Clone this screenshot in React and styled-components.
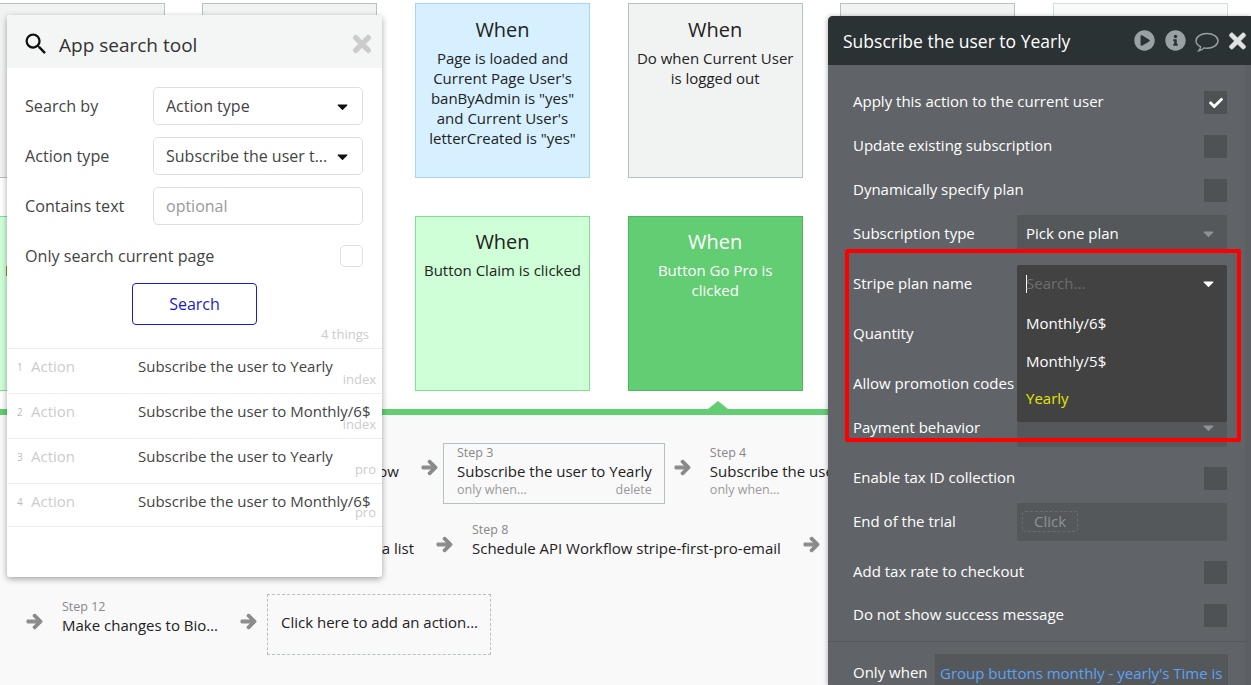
import React from "react";
import styled, { createGlobalStyle } from "styled-components";
import { FaArrowRight, FaTimes, FaCheck, FaPlayCircle, FaInfoCircle, FaCaretDown } from "react-icons/fa";
import { MdSearch } from "react-icons/md";

const Global = createGlobalStyle`
  html, body { margin: 0; padding: 0; background: #fff; }
  * { box-sizing: border-box; }
  body { font-family: "Open Sans", "Liberation Sans", sans-serif; }
`;

const Page = styled.div`
  position: relative;
  width: 1251px;
  height: 685px;
  overflow: hidden;
  background: #fff;
`;

/* ---------- canvas of event cards ---------- */
const Canvas = styled.section`
  height: 409px;
  padding-top: 3px;
  margin-left: -10.3px;
  display: grid;
  grid-template-columns: repeat(6, 175px);
  grid-auto-rows: 175px;
  column-gap: 37.67px;
  row-gap: 38px;
`;

const tones = {
  gray: { bg: "#f1f3f2", line: "#b6c1c6", ink: "#222" },
  pale: { bg: "#f9fbfb", line: "#d3dcdf", ink: "#222" },
  blue: { bg: "#d6f0ff", line: "#a5d6f5", ink: "#222" },
  mint: { bg: "#cfffd6", line: "#7fe08f", ink: "#222" },
  green: { bg: "#62cd72", line: "#4cb85c", ink: "#fff" },
};

const Card = styled.div`
  background: ${(p) => tones[p.$tone].bg};
  border: 1px solid ${(p) => tones[p.$tone].line};
  color: ${(p) => tones[p.$tone].ink};
  padding: ${(p) => (p.$tight ? "10px" : "11px")} 6px 0;
  text-align: center;
`;

const CardTitle = styled.div`
  font-size: 20px;
  line-height: 30px;
  margin-bottom: 3px;
`;

const CardText = styled.div`
  font-size: 15px;
  line-height: 20px;
`;

/* ---------- workflow editor ---------- */
const Editor = styled.section`
  position: relative;
  height: 276px;
  border-top: 6px solid #62cd72;
  background: #f9f9f9;
  padding-top: 28px;
  box-shadow: 0 -6px 10px rgba(0, 0, 0, 0.025);

  &::before {
    content: "";
    position: absolute;
    left: 708px;
    top: -14px;
    border-left: 10px solid transparent;
    border-right: 10px solid transparent;
    border-bottom: 8px solid #62cd72;
  }
`;

const StepRow = styled.div`
  display: flex;
  align-items: flex-start;
  height: 61px;
  margin-bottom: 16px;
  padding-left: ${(p) => p.$indent}px;
  white-space: nowrap;
`;

const Arrow = styled(FaArrowRight)`
  flex: none;
  width: 17px;
  height: 17px;
  margin-top: 16px;
  color: #8a8a8a;
  stroke: currentColor;
  stroke-width: 35;
`;

const Step = styled.div`
  flex: none;
  height: 61px;
  margin: 0 9px 0 5px;
  padding: 0 12px 0 13px;
  border: 1px solid ${(p) => (p.$selected ? "#b6c1c6" : "transparent")};
  width: ${(p) => (p.$width ? `${p.$width}px` : "auto")};
  text-align: ${(p) => (p.$width ? "right" : "left")};
`;

const StepLabel = styled.div`
  font-size: 12.5px;
  line-height: 17px;
  color: #888;
  text-align: left;
`;

const StepName = styled.div`
  font-size: 15px;
  line-height: 21px;
  color: #222;
`;

const StepFoot = styled.div`
  display: flex;
  justify-content: space-between;
  font-size: 12.5px;
  line-height: 16px;
  color: #999;
`;

const AddAction = styled.div`
  flex: none;
  width: 224px;
  height: 61px;
  margin: -3px 0 0 10px;
  padding: 16px 13px 0;
  border: 1px dashed #b6c1c6;
  font-size: 15px;
  line-height: 22px;
  color: #222;
`;

/* ---------- app search tool ---------- */
const SearchPanel = styled.aside`
  position: absolute;
  left: 7px;
  top: 15px;
  width: 375px;
  height: 562px;
  background: #fff;
  border-radius: 3px;
  box-shadow: 0 2px 6px rgba(0, 0, 0, 0.35);
  overflow: hidden;
`;

const SearchHead = styled.header`
  display: flex;
  align-items: center;
  height: 53px;
  padding: 6px 10px 0 15px;
  background: #f4f5f5;
  color: #333;
  font-size: 19px;
`;

const SearchTitle = styled.span`
  flex: 1;
  margin-left: 9px;
`;

const SearchIcon = styled(MdSearch)`
  width: 28px;
  height: 28px;
  margin-bottom: 2px;
  color: #111;
`;

const CloseX = styled(FaTimes)`
  width: 18px;
  height: 26px;
  margin: 0 1px 2px 0;
  color: #ccc;
  stroke: currentColor;
  stroke-width: 15;
`;

const SearchForm = styled.div`
  padding: 19px 19px 0 18px;
  display: flex;
  flex-direction: column;
  gap: 12px;
`;

const FormRow = styled.div`
  display: flex;
  align-items: center;
  justify-content: space-between;
  height: 38px;
  font-size: 16.15px;
  color: #444;
`;

const Field = styled.div`
  display: flex;
  align-items: center;
  width: 210px;
  height: 38px;
  padding: 0 11px 0 12px;
  border: 1px solid #dcdfe0;
  border-radius: 5px;
  font-size: 16px;
  color: ${(p) => (p.$placeholder ? "#999" : "#444")};
`;

const FieldText = styled.span`
  flex: 1;
  overflow: hidden;
  white-space: nowrap;
`;

const Caret = styled(FaCaretDown)`
  flex: none;
  width: 17px;
  height: 17px;
  color: ${(p) => p.$color || "#111"};
`;

const CheckBox = styled.div`
  width: 23px;
  height: 22px;
  border: 1px solid #dcdfe0;
  border-radius: 5px;
`;

const SearchButton = styled.button`
  display: block;
  width: 125px;
  height: 42px;
  margin: 8px auto 0;
  border: 1px solid #1a1ad6;
  border-radius: 4px;
  background: #fff;
  color: #1a1ad6;
  font: 16px "Open Sans", sans-serif;
`;

const Count = styled.div`
  text-align: right;
  padding-right: 13px;
  margin-top: 1px;
  font-size: 13px;
  line-height: 17px;
  color: #ccc;
  height: 22px;
`;

const Result = styled.div`
  position: relative;
  display: flex;
  align-items: flex-start;
  height: 45px;
  margin-left: 1px;
  padding-top: 7px;
  border-top: 1px solid #eceeee;
  &:last-of-type { height: 44px; border-bottom: 1px solid #eceeee; }
`;

const ResultNum = styled.span`
  width: 23px;
  padding-left: 9px;
  font-size: 10px;
  line-height: 22px;
  color: #bbb;
`;

const ResultKind = styled.span`
  width: 107px;
  font-size: 15px;
  line-height: 21px;
  color: #ccc;
`;

const ResultName = styled.span`
  font-size: 15px;
  line-height: 21px;
  color: #444;
  white-space: nowrap;
`;

const ResultTag = styled.span`
  position: absolute;
  right: 6px;
  bottom: 5px;
  font-size: 13px;
  line-height: 17px;
  color: #ccc;
`;

/* ---------- action property editor ---------- */
const ActionPanel = styled.aside`
  position: absolute;
  top: 16px;
  left: 828px;
  right: 0;
  bottom: 0;
  border-top-left-radius: 5px;
  overflow: hidden;
  background: #606468;
  box-shadow: -1px 0 4px rgba(0, 0, 0, 0.25);
`;

const ActionHead = styled.header`
  display: flex;
  align-items: center;
  height: 49px;
  padding: 0 5px 0 15px;
  background: #2b3233;
  color: #fff;
  font-size: 17.5px;
`;

const ActionTitle = styled.span`
  flex: 1;
`;

const HeadIcons = styled.div`
  display: flex;
  align-items: center;
  gap: 10px;
  color: #98a2a6;
`;

const BubbleIcon = styled.svg`
  width: 24px;
  height: 23px;
  margin: 3px -1px 0 -1px;
  fill: none;
  stroke: currentColor;
  stroke-width: 1.4;
`;

const HeadX = styled(FaTimes)`
  width: 17px;
  height: 24px;
  margin-left: 1px;
  color: #e0e3e3;
  stroke: currentColor;
  stroke-width: 10;
`;

const ActionBody = styled.div`
  height: 620px;
  padding: 18px 0 0 25px;
  border-right: 6px solid #5c6064;
`;

const PropRow = styled.div`
  position: relative;
  display: flex;
  justify-content: space-between;
  height: ${(p) => p.$h}px;
  padding-right: 18px;
  color: #fff;
  font-size: 15px;
  line-height: 36px;
`;

const Check = styled.div`
  display: flex;
  align-items: center;
  justify-content: center;
  width: 23px;
  height: 23px;
  margin-top: 8px;
  background: #4e5255;
  color: #fff;
`;

const DarkField = styled.div`
  display: flex;
  align-items: center;
  width: 210px;
  height: 38px;
  padding: 0 10px 2px 9px;
  background: #54585b;
  border-radius: 2px;
  color: #fff;
`;

const Dropdown = styled.div`
  position: absolute;
  z-index: 2;
  top: 0;
  right: 18px;
  width: 210px;
  height: 157px;
  background: #424242;
  border-radius: 2px;
`;

const DropSearch = styled.div`
  display: flex;
  align-items: center;
  height: 38px;
  padding: 0 10px 2px 9px;
  color: #6e6e6e;
  span { flex: 1; }
`;

const Cursor = styled.i`
  display: inline-block;
  width: 1px;
  height: 18px;
  margin-right: -1px;
  vertical-align: -4px;
  background: #fff;
`;

const Option = styled.div`
  height: 37.5px;
  padding-left: 9px;
  color: ${(p) => (p.$current ? "#e6e600" : "#fff")};
  margin-top: ${(p) => (p.$first ? "2px" : "0")};
`;

const Chip = styled.span`
  display: block;
  width: 56px;
  height: 21px;
  margin-left: -4px;
  padding-left: 11px;
  border: 1px dashed #696d70;
  border-radius: 3px;
  line-height: 18px;
  color: #8e9295;
`;

const Divider = styled.div`
  height: 1px;
  margin: 0 0 12px -25px;
  background: #54585b;
`;

const WhenField = styled.div`
  width: 293px;
  height: 40px;
  margin-right: -1px;
  padding-left: 5px;
  background: #54585b;
  color: #5ea2f5;
  white-space: nowrap;
  line-height: 38px;
`;

const Annotation = styled.div`
  position: absolute;
  z-index: 5;
  left: 845px;
  top: 249px;
  width: 396px;
  height: 193px;
  border: 4px solid #f00;
  border-radius: 2px;
`;

const results = [
  ["Subscribe the user to Yearly", "index"],
  ["Subscribe the user to Monthly/6$", "index"],
  ["Subscribe the user to Yearly", "pro"],
  ["Subscribe the user to Monthly/6$", "pro"],
];

export default function App() {
  return (
    <Page>
      <Global />
      <Canvas>
        <Card $tone="gray" />
        <Card $tone="gray" />
        <Card $tone="blue">
          <CardTitle>When</CardTitle>
          <CardText>Page is loaded and Current Page User's banByAdmin is "yes" and Current User's letterCreated is "yes"</CardText>
        </Card>
        <Card $tone="gray">
          <CardTitle>When</CardTitle>
          <CardText>Do when Current User is logged out</CardText>
        </Card>
        <Card $tone="gray" />
        <Card $tone="pale" />
        <Card $tone="mint" $tight>
          <CardTitle>When</CardTitle>
          <CardText>Button Buy is clicked</CardText>
        </Card>
        <Card $tone="mint" />
        <Card $tone="mint" $tight>
          <CardTitle>When</CardTitle>
          <CardText>Button Claim is clicked</CardText>
        </Card>
        <Card $tone="green" $tight>
          <CardTitle>When</CardTitle>
          <CardText>Button Go Pro is clicked</CardText>
        </Card>
      </Canvas>

      <Editor>
        <StepRow $indent={207}>
          <Step $width={200}>
            <StepLabel>Step 2</StepLabel>
            <StepName>Schedule API Workflow</StepName>
          </Step>
          <Arrow />
          <Step $selected>
            <StepLabel>Step 3</StepLabel>
            <StepName>Subscribe the user to Yearly</StepName>
            <StepFoot><span>only when...</span><span>delete</span></StepFoot>
          </Step>
          <Arrow />
          <Step>
            <StepLabel>Step 4</StepLabel>
            <StepName>Subscribe the user to Monthly/6$</StepName>
            <StepFoot><span>only when...</span></StepFoot>
          </Step>
        </StepRow>
        <StepRow $indent={207}>
          <Step $width={215}>
            <StepLabel>Step 7</StepLabel>
            <StepName>Make changes to a list</StepName>
          </Step>
          <Arrow />
          <Step>
            <StepLabel>Step 8</StepLabel>
            <StepName>Schedule API Workflow stripe-first-pro-email</StepName>
          </Step>
          <Arrow />
        </StepRow>
        <StepRow $indent={26}>
          <Arrow />
          <Step>
            <StepLabel>Step 12</StepLabel>
            <StepName>Make changes to Bio…</StepName>
          </Step>
          <Arrow />
          <AddAction>Click here to add an action...</AddAction>
        </StepRow>
      </Editor>

      <SearchPanel>
        <SearchHead>
          <SearchIcon />
          <SearchTitle>App search tool</SearchTitle>
          <CloseX />
        </SearchHead>
        <SearchForm>
          <FormRow>
            Search by
            <Field><FieldText>Action type</FieldText><Caret /></Field>
          </FormRow>
          <FormRow>
            Action type
            <Field><FieldText>Subscribe the user t...</FieldText><Caret /></Field>
          </FormRow>
          <FormRow>
            Contains text
            <Field $placeholder>optional</Field>
          </FormRow>
          <FormRow>
            Only search current page
            <CheckBox />
          </FormRow>
        </SearchForm>
        <SearchButton>Search</SearchButton>
        <Count>4 things</Count>
        {results.map(([name, tag], i) => (
          <Result key={i}>
            <ResultNum>{i + 1}</ResultNum>
            <ResultKind>Action</ResultKind>
            <ResultName>{name}</ResultName>
            <ResultTag>{tag}</ResultTag>
          </Result>
        ))}
      </SearchPanel>

      <ActionPanel>
        <ActionHead>
          <ActionTitle>Subscribe the user to Yearly</ActionTitle>
          <HeadIcons>
            <FaPlayCircle size={21} />
            <FaInfoCircle size={21} />
            <BubbleIcon viewBox="0 0 24 23">
              <path d="M12 2.500c6 0 11 3 11 7.300s-5 7.400-11 7.400c-1 0-2-.1-3-.3-1.200 1.400-3 2.400-5.200 2.800 1-1.100 1.700-2.400 1.800-4C2.800 14.300 1 12.200 1 9.800 1 5.500 6 2.500 12 2.500z" />
            </BubbleIcon>
            <HeadX />
          </HeadIcons>
        </ActionHead>
        <ActionBody>
          <PropRow $h={44}>Apply this action to the current user<Check><FaCheck size={14} /></Check></PropRow>
          <PropRow $h={44}>Update existing subscription<Check /></PropRow>
          <PropRow $h={44}>Dynamically specify plan<Check /></PropRow>
          <PropRow $h={50}>
            Subscription type
            <DarkField><FieldText>Pick one plan</FieldText><Caret $color="#8e9295" /></DarkField>
          </PropRow>
          <PropRow $h={50}>
            Stripe plan name
            <Dropdown>
              <DropSearch><span><Cursor />Search...</span><Caret $color="#fff" /></DropSearch>
              <Option $first>Monthly/6$</Option>
              <Option>Monthly/5$</Option>
              <Option $current>Yearly</Option>
            </Dropdown>
          </PropRow>
          <PropRow $h={50}>Quantity</PropRow>
          <PropRow $h={44}>Allow promotion codes</PropRow>
          <PropRow $h={50}>
            Payment behavior
            <DarkField><FieldText /><Caret $color="#8e9295" /></DarkField>
          </PropRow>
          <PropRow $h={44}>Enable tax ID collection<Check /></PropRow>
          <PropRow $h={50}>
            End of the trial
            <DarkField><Chip>Click</Chip></DarkField>
          </PropRow>
          <PropRow $h={43}>Add tax rate to checkout<Check /></PropRow>
          <PropRow $h={45}>Do not show success message<Check /></PropRow>
          <Divider />
          <PropRow $h={40}>
            Only when
            <WhenField>Group buttons monthly - yearly's Time is</WhenField>
          </PropRow>
        </ActionBody>
      </ActionPanel>
      <Annotation />
    </Page>
  );
}
